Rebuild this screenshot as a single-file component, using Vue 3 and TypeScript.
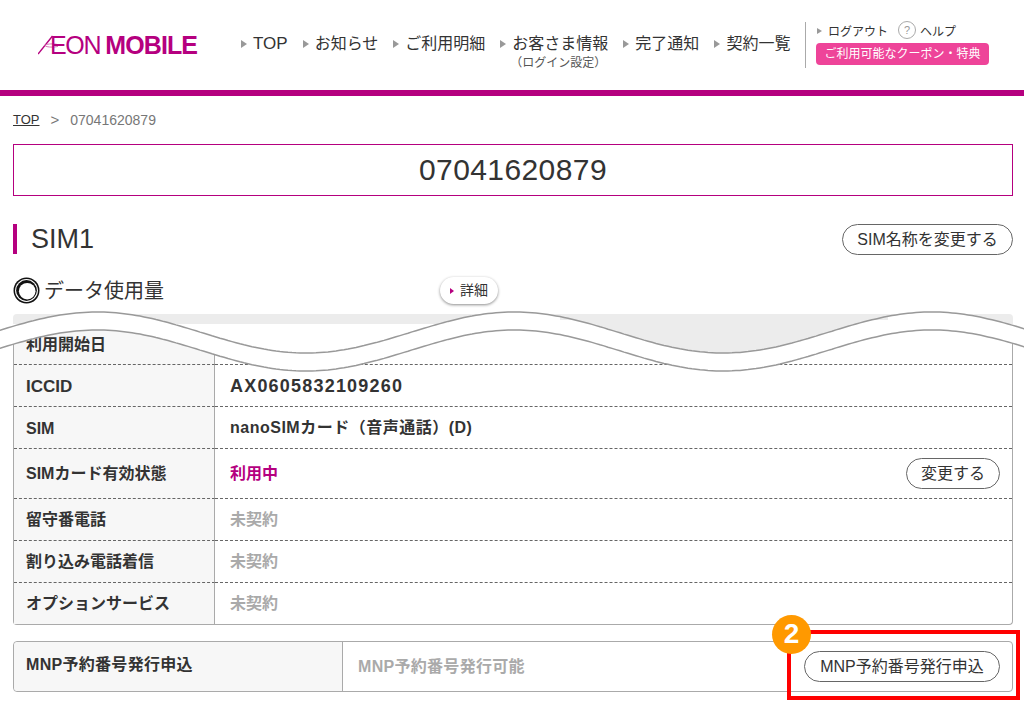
<script setup lang="ts">
const navItems = [
  { label: 'TOP' },
  { label: 'お知らせ' },
  { label: 'ご利用明細' },
  { label: 'お客さま情報', sub: '（ログイン設定）' },
  { label: '完了通知' },
  { label: '契約一覧' },
]

// the cut mark over the table: two parallel waves
const topY = (x: number) => 332.5 - 20.5 * Math.cos((2 * Math.PI * (x - 97)) / 417.5)
const lowY = (x: number) => topY(x) + 18

const xs: number[] = []
for (let x = -4; x <= 1028; x += 4) xs.push(x)

const line = (fn: (x: number) => number) => xs.map((x) => `${x},${fn(x).toFixed(1)}`).join(' ')
const topLine = line(topY)
const lowLine = line(lowY)

const gapShape = [
  ...xs.map((x) => `${x},${Math.min(topY(x), 324).toFixed(1)}`),
  ...[...xs].reverse().map((x) => `${x},${lowY(x).toFixed(1)}`),
].join(' ')

const troughXs = xs.filter((x) => x >= 560 && x <= 890)
const troughShape = [
  ...troughXs.map((x) => `${x},${topY(x).toFixed(1)}`),
  `${troughXs[troughXs.length - 1]},320`,
  `${troughXs[0]},320`,
].join(' ')
</script>

<template>
  <div class="page">
    <header class="header">
      <div class="logo">
        <svg class="logoMark" width="20" height="20" viewBox="0 0 20 20">
          <line x1="0" y1="19" x2="14.5" y2="1" stroke="#b5007f" stroke-width="1.4" />
          <ellipse cx="14" cy="10.5" rx="7" ry="1.6" stroke="#d77ab9" stroke-width="1" fill="none" />
        </svg>
        <span class="logoEon">EON</span>
        <span class="logoMobile">MOBILE</span>
      </div>
      <nav class="nav">
        <a v-for="item in navItems" :key="item.label" class="navItem">
          <span class="navLabel" :class="{ latin: item.label === 'TOP' }"><i class="tri"></i>{{ item.label }}</span>
          <span v-if="item.sub" class="navSub">{{ item.sub }}</span>
        </a>
      </nav>
      <div class="headerSide">
        <div class="sideLinks">
          <span class="sideLink"><i class="tri small"></i>ログアウト</span>
          <span class="help"><span class="helpIcon">?</span>ヘルプ</span>
        </div>
        <span class="coupon">ご利用可能なクーポン・特典</span>
      </div>
    </header>

    <main class="main">
      <div class="crumbs">
        <a class="crumbLink">TOP</a>
        <span class="crumbSep">&gt;</span>
        <span class="crumbNum">07041620879</span>
      </div>
      <div class="numberBox">07041620879</div>

      <div class="simHead">
        <h2 class="simTitle">SIM1</h2>
        <button class="pill simBtn">SIM名称を変更する</button>
      </div>

      <div class="usageHead">
        <div class="usageTitle">
          <svg width="27" height="27" viewBox="0 0 26 26">
            <circle cx="13" cy="13" r="12.5" fill="#111" />
            <circle cx="13" cy="13" r="11" fill="#fff" />
            <circle cx="13" cy="13" r="10" fill="#111" />
            <circle cx="13.7" cy="13.7" r="8" fill="#fff" />
          </svg>
          <span class="usageText">データ使用量</span>
        </div>
        <button class="detailBtn"><i class="tri pink"></i>詳細</button>
      </div>

      <div class="panel">
        <div class="panelTop"></div>
        <table class="info">
          <tbody>
            <tr class="rowFirst"><th>利用開始日</th><td></td></tr>
            <tr class="rowLatin"><th class="iccidHead">ICCID</th><td class="dark iccid">AX0605832109260</td></tr>
            <tr class="rowLatin"><th>SIM</th><td class="dark simType">nanoSIMカード（音声通話）(D)</td></tr>
            <tr class="rowTall">
              <th>SIMカード有効状態</th>
              <td>
                <div class="cellRow">
                  <span class="active">利用中</span>
                  <button class="pill changeBtn">変更する</button>
                </div>
              </td>
            </tr>
            <tr><th>留守番電話</th><td class="muted">未契約</td></tr>
            <tr><th>割り込み電話着信</th><td class="muted">未契約</td></tr>
            <tr><th>オプションサービス</th><td class="muted">未契約</td></tr>
          </tbody>
        </table>

        <svg class="wave" width="1024" height="80" viewBox="0 300 1024 80">
          <polygon :points="gapShape" fill="#fff" />
          <polygon :points="troughShape" fill="#ececec" />
          <polyline :points="topLine" class="waveLine" />
          <polyline :points="lowLine" class="waveLine" />
        </svg>
      </div>

      <div class="mnp">
        <div class="mnpLabel">MNP予約番号発行申込</div>
        <div class="mnpBody">
          <span class="muted">MNP予約番号発行可能</span>
          <button class="pill mnpBtn">MNP予約番号発行申込</button>
        </div>
        <div class="callout"></div>
        <div class="badge">2</div>
      </div>
    </main>
  </div>
</template>

<style scoped>
.page {
  width: 1024px;
  height: 727px;
  overflow: hidden;
  background: #fff;
  color: #333;
  font-family: "Liberation Sans", "Noto Sans CJK JP", sans-serif;
}

.header {
  display: flex;
  align-items: center;
  height: 90px;
  border-bottom: 6px solid #b5007f;
}

.logo {
  display: flex;
  align-items: center;
  width: 241px;
  padding-left: 38px;
  box-sizing: border-box;
  color: #b5007f;
}

.logoMark {
  margin-right: -8px;
}

.logoEon {
  font-size: 25px;
  letter-spacing: -1.3px;
  margin-right: 5px;
}

.logoMobile {
  font-size: 25px;
  font-weight: 700;
  letter-spacing: -0.9px;
}

.nav {
  display: flex;
  gap: 15px;
  width: 564px;
  align-items: flex-start;
  padding-top: 11px;
}

.navItem {
  display: flex;
  flex-direction: column;
  align-items: center;
  font-size: 16px;
  line-height: 24px;
  color: #333;
}

.navLabel {
  white-space: nowrap;
}

.navLabel.latin {
  font-size: 17px;
}

.navSub {
  padding: 1px 0 0 8px;
  font-size: 12px;
  line-height: 12px;
  color: #555;
}

.tri {
  display: inline-block;
  border-left: 6px solid #999;
  border-top: 4px solid transparent;
  border-bottom: 4px solid transparent;
  margin-right: 6px;
  vertical-align: 1px;
}

.tri.small {
  border-left-width: 5px;
  border-top-width: 3px;
  border-bottom-width: 3px;
  vertical-align: 2px;
}

.tri.pink {
  border-left: 4px solid #b5007f;
  border-top-width: 3px;
  border-bottom-width: 3px;
}

.headerSide {
  border-left: 1px solid #aaa;
  height: 46px;
  padding-left: 10px;
}

.sideLinks {
  display: flex;
  align-items: center;
  height: 16px;
  font-size: 12px;
  padding-left: 1px;
  margin-bottom: 5px;
}

.help {
  display: flex;
  align-items: center;
  margin-left: 10px;
}

.helpIcon {
  width: 16px;
  height: 16px;
  border: 1px solid #aaa;
  border-radius: 50%;
  font-size: 11px;
  line-height: 16px;
  text-align: center;
  color: #999;
  margin-right: 4px;
}

.coupon {
  display: inline-block;
  width: 173px;
  height: 22px;
  border-radius: 4px;
  background: #ee4499;
  color: #fff;
  font-size: 12px;
  line-height: 22px;
  text-align: center;
  white-space: nowrap;
}

.main {
  padding: 0 11px 0 13px;
}

.crumbs {
  display: flex;
  gap: 11px;
  padding-top: 16px;
  font-size: 13px;
  line-height: 16px;
  color: #777;
}

.crumbNum {
  font-size: 14px;
}

.crumbSep {
  font-size: 15px;
}

.crumbLink {
  color: #333;
  text-decoration: underline;
}

.numberBox {
  margin-top: 16px;
  height: 50px;
  border: 1px solid #b5007f;
  font-size: 30px;
  letter-spacing: 0.4px;
  line-height: 50px;
  text-align: center;
}

.simHead {
  display: flex;
  justify-content: space-between;
  align-items: center;
  margin-top: 28px;
  height: 30px;
}

.simTitle {
  margin: 0;
  border-left: 4px solid #b5007f;
  padding-left: 14px;
  font-size: 27px;
  font-weight: 400;
  line-height: 30px;
}

.pill {
  background: #fff;
  border: 1px solid #666;
  border-radius: 16px;
  color: #333;
  font-family: inherit;
  font-size: 16px;
  padding: 0 0 3px;
}

.simBtn {
  width: 171px;
  height: 31px;
}

.usageHead {
  display: flex;
  align-items: center;
  margin-top: 21px;
  height: 30px;
}

.usageTitle {
  display: flex;
  align-items: center;
  gap: 4px;
  width: 427px;
  font-size: 20px;
}

.usageText {
  padding-bottom: 2px;
}

.detailBtn {
  width: 58px;
  height: 27px;
  border: none;
  border-radius: 14px;
  background: #fff;
  box-shadow: 0 1px 3px rgba(0, 0, 0, 0.45);
  color: #333;
  font-family: inherit;
  font-size: 14px;
  padding: 0 0 3px;
}

.panel {
  position: relative;
  margin-top: 9px;
}

.panelTop {
  height: 10px;
  background: #ececec;
  border-radius: 4px 4px 0 0;
}

.info {
  width: 100%;
  border-collapse: separate;
  border-spacing: 0;
  border: 1px solid #aaa;
  border-top: none;
  border-radius: 0 0 4px 4px;
  font-size: 16px;
}

.info th,
.info td {
  height: 37px;
  padding: 0 12px 4px 15px;
  border-bottom: 1px dashed #666;
}

.info tr:last-child th,
.info tr:last-child td {
  border-bottom: none;
  height: 37px;
}

.info th {
  width: 188px;
  box-sizing: content-box;
  background: #f7f7f7;
  border-right: 1px solid #aaa;
  text-align: left;
  font-weight: 700;
  padding-left: 12px;
  padding-right: 0;
  white-space: nowrap;
}

.info .rowFirst th,
.info .rowFirst td {
  height: 38px;
  padding-bottom: 2px;
}

.info .rowLatin th,
.info .rowLatin td {
  height: 39px;
  padding-top: 2px;
  padding-bottom: 0;
}

.info .rowLatin td.simType {
  height: 37px;
  padding-top: 0;
  padding-bottom: 4px;
}

.info .rowTall th,
.info .rowTall td {
  height: 45px;
}

.iccidHead {
  font-size: 17px;
}

.iccid {
  font-size: 18px;
  letter-spacing: 1.2px;
}

.simType {
  letter-spacing: 0.5px;
}

.dark {
  font-weight: 700;
}

.muted {
  font-weight: 700;
  color: #aaa;
}

.active {
  font-weight: 700;
  color: #b5007f;
}

.cellRow {
  display: flex;
  justify-content: space-between;
  align-items: center;
  position: relative;
  top: 2px;
}

.cellRow .active {
  position: relative;
  top: -2px;
}

.changeBtn {
  width: 94px;
  height: 31px;
}

.wave {
  position: absolute;
  left: -13px;
  top: -14px;
  pointer-events: none;
}

.waveLine {
  fill: none;
  stroke: #999;
  stroke-width: 1.5;
}

.mnp {
  position: relative;
  display: flex;
  margin-top: 16px;
  height: 49px;
  border: 1px solid #aaa;
  border-radius: 4px;
}

.mnpLabel {
  width: 316px;
  padding-left: 12px;
  background: #f7f7f7;
  border-right: 1px solid #aaa;
  font-size: 16px;
  letter-spacing: 0.3px;
  font-weight: 700;
  line-height: 46px;
  border-radius: 4px 0 0 4px;
}

.mnpBody {
  flex: 1;
  display: flex;
  justify-content: space-between;
  align-items: center;
  padding: 0 12px 0 15px;
  font-size: 16px;
}

.mnpBody .muted {
  letter-spacing: 0.3px;
  padding-bottom: 4px;
}

.mnpBtn {
  width: 196px;
  height: 31px;
}

.callout {
  position: absolute;
  left: 773px;
  top: -12px;
  width: 225px;
  height: 62px;
  border: 4px solid #f00;
}

.badge {
  position: absolute;
  left: 758px;
  top: -27px;
  width: 39px;
  height: 39px;
  border-radius: 50%;
  background: #f90;
  color: #fff;
  font-size: 28px;
  font-weight: 700;
  line-height: 38px;
  text-align: center;
}
</style>
